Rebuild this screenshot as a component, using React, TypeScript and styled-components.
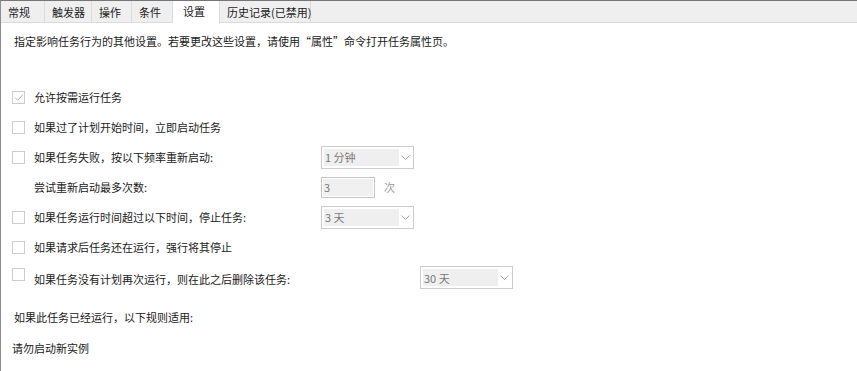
import React from 'react';
import styled, { createGlobalStyle } from 'styled-components';

const GlobalStyle = createGlobalStyle`
  html, body {
    margin: 0;
    padding: 0;
    background: #ffffff;
  }
  body {
    font-family: 'Noto Sans CJK SC', 'Noto Sans', sans-serif;
    font-size: 11px;
    color: #1b1b1b;
  }
`;

const Window = styled.div`
  width: 857px;
  height: 371px;
  box-sizing: border-box;
  border-top: 1px solid #767676;
  border-left: 1px solid #8c8c8c;
  display: flex;
  flex-direction: column;
  overflow: hidden;
`;

const TabBar = styled.div`
  display: flex;
  flex: none;
  height: 22px;
  background: #efefef;
  border-bottom: 1px solid #dadada;
  box-sizing: border-box;
`;

const Tab = styled.div<{ $w: number; $active?: boolean }>`
  width: ${(p) => p.$w}px;
  box-sizing: border-box;
  display: flex;
  align-items: ${(p) => (p.$active ? 'flex-start' : 'center')};
  padding: ${(p) => (p.$active ? '2px 0 0 10px' : '0 0 0 7px')};
  border-right: 1px solid #dcdcdc;
  background: ${(p) => (p.$active ? '#ffffff' : 'transparent')};
  height: ${(p) => (p.$active ? '23px' : '21px')};
  color: #1b1b1b;
  white-space: nowrap;
  position: relative;
  z-index: ${(p) => (p.$active ? 1 : 0)};
`;

const Body = styled.div`
  display: flex;
  flex-direction: column;
  flex: none;
  padding: 8px 0 0 0;
`;

const Description = styled.div`
  padding-left: 13px;
  height: 20px;
  line-height: 20px;
  margin-bottom: 31px;
  flex: none;
`;

const Row = styled.div<{ $h?: number; $top?: boolean }>`
  display: flex;
  flex: none;
  align-items: ${(p) => (p.$top ? 'flex-start' : 'center')};
  height: ${(p) => p.$h ?? 30}px;
  padding-left: 11px;
`;

const Box = styled.span<{ $top?: number }>`
  width: 13px;
  height: 13px;
  box-sizing: border-box;
  border: 1px solid #cdcdcd;
  background: #ffffff;
  flex: none;
  margin-right: 9px;
  margin-top: ${(p) => p.$top ?? 0}px;
  display: flex;
  align-items: center;
  justify-content: center;
`;

const Label = styled.span<{ $w?: number; $indent?: number; $top?: number }>`
  width: ${(p) => (p.$w ? `${p.$w}px` : 'auto')};
  margin-left: ${(p) => p.$indent ?? 0}px;
  margin-top: ${(p) => p.$top ?? 0}px;
  white-space: nowrap;
  flex: none;
`;

const Select = styled.div<{ $top?: number }>`
  width: 93px;
  height: 23px;
  box-sizing: border-box;
  border: 1px solid #cccccc;
  background: #ffffff;
  padding: 2px;
  display: flex;
  align-items: stretch;
  margin-top: ${(p) => p.$top ?? 0}px;
`;

const SelectValue = styled.span`
  width: 74px;
  background: #efefef;
  color: #7a7a7a;
  padding-left: 1px;
  display: flex;
  align-items: center;
`;

const Chevron = styled.span`
  flex: 1;
  display: flex;
  align-items: center;
  justify-content: center;
`;

const NumberField = styled.div`
  width: 54px;
  height: 21px;
  box-sizing: border-box;
  border: 1px solid #c6c6c6;
  padding: 1px;
  display: flex;
`;

const NumberValue = styled.span`
  flex: 1;
  background: #f0f0f0;
  color: #7a7a7a;
  padding-left: 1px;
  display: flex;
  align-items: center;
`;

const Unit = styled.span`
  margin-left: 9px;
  color: #9a9a9a;
`;

const Plain = styled.div<{ $pad: number; $h: number; $gap?: number }>`
  padding-left: ${(p) => p.$pad}px;
  height: ${(p) => p.$h}px;
  margin-top: ${(p) => p.$gap ?? 0}px;
  display: flex;
  flex: none;
  align-items: center;
`;

function Check({ checked, top }: { checked?: boolean; top?: number }) {
  return (
    <Box $top={top}>
      {checked && (
        <svg width="10" height="9" viewBox="0 0 10 9">
          <path d="M1 4.5 L3.8 7.3 L9 1.5" fill="none" stroke="#b3b3b3" strokeWidth="1" />
        </svg>
      )}
    </Box>
  );
}

function Dropdown({ value, top }: { value: string; top?: number }) {
  return (
    <Select $top={top}>
      <SelectValue>{value}</SelectValue>
      <Chevron>
        <svg width="9" height="5" viewBox="0 0 9 5">
          <path d="M0.5 0.5 L4.5 4.5 L8.5 0.5" fill="none" stroke="#a8a8a8" strokeWidth="1" />
        </svg>
      </Chevron>
    </Select>
  );
}

const tabs = [
  { name: '常规', w: 44 },
  { name: '触发器', w: 47 },
  { name: '操作', w: 40 },
  { name: '条件', w: 41 },
  { name: '设置', w: 47, active: true },
  { name: '历史记录(已禁用)', w: 91 },
];

export default function App() {
  return (
    <>
      <GlobalStyle />
      <Window>
        <TabBar>
          {tabs.map((t) => (
            <Tab key={t.name} $w={t.w} $active={t.active}>
              {t.name}
            </Tab>
          ))}
        </TabBar>
        <Body>
          <Description>
            指定影响任务行为的其他设置。若要更改这些设置，请使用“属性”命令打开任务属性页。
          </Description>
          <Row>
            <Check checked />
            <Label>允许按需运行任务</Label>
          </Row>
          <Row>
            <Check />
            <Label>如果过了计划开始时间，立即启动任务</Label>
          </Row>
          <Row>
            <Check />
            <Label $w={287}>如果任务失败，按以下频率重新启动:</Label>
            <Dropdown value="1 分钟" />
          </Row>
          <Row>
            <Label $w={287} $indent={22}>尝试重新启动最多次数:</Label>
            <NumberField>
              <NumberValue>3</NumberValue>
            </NumberField>
            <Unit>次</Unit>
          </Row>
          <Row>
            <Check />
            <Label $w={287}>如果任务运行时间超过以下时间，停止任务:</Label>
            <Dropdown value="3 天" />
          </Row>
          <Row>
            <Check />
            <Label>如果请求后任务还在运行，强行将其停止</Label>
          </Row>
          <Row $h={32} $top>
            <Check top={6} />
            <Label $w={386} $top={9}>如果任务没有计划再次运行，则在此之后删除该任务:</Label>
            <Dropdown value="30 天" top={4} />
          </Row>
          <Plain $pad={13} $h={30} $gap={8}>
            如果此任务已经运行，以下规则适用:
          </Plain>
          <Plain $pad={11} $h={32}>
            请勿启动新实例
          </Plain>
        </Body>
      </Window>
    </>
  );
}
